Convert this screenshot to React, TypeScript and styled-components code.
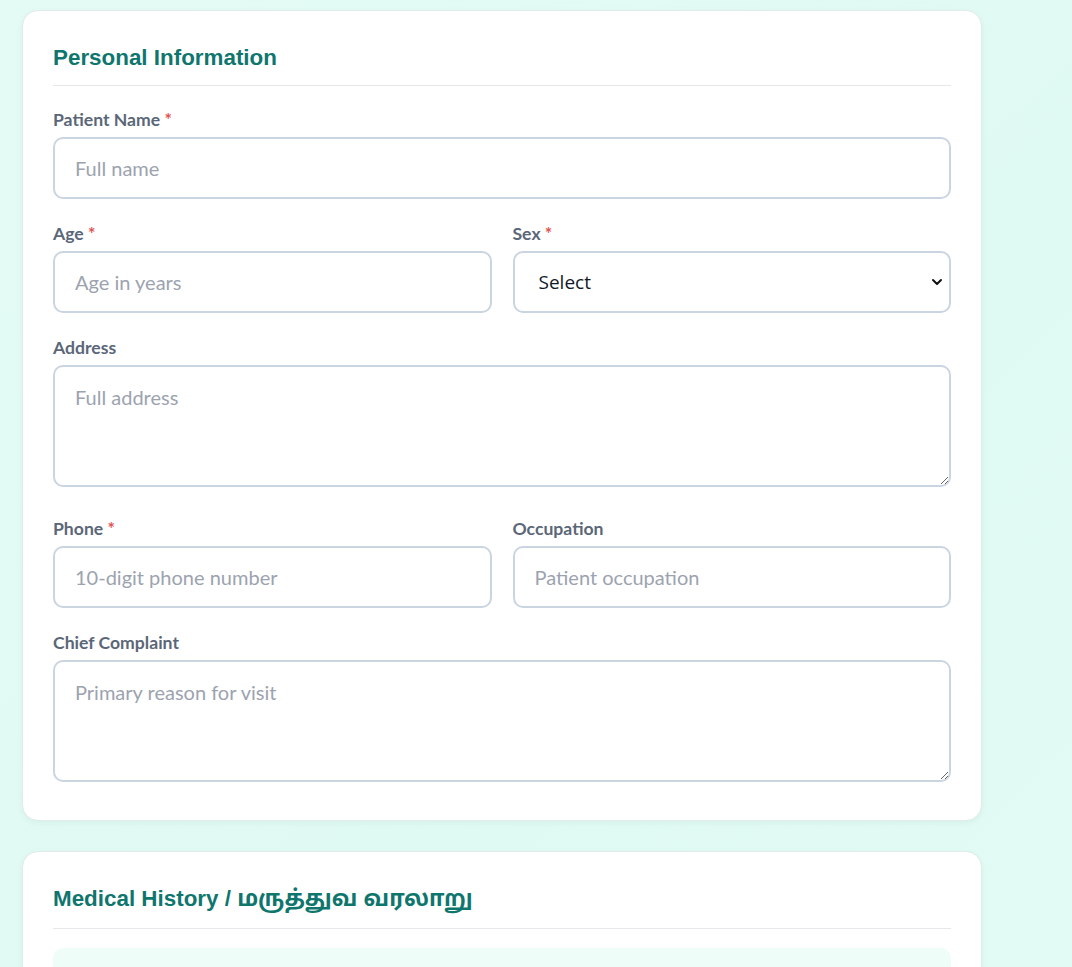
import React from "react";
import styled, {createGlobalStyle} from "styled-components";
import {ChevronDown} from "lucide-react";

const GlobalStyle = createGlobalStyle`
  html, body {
    margin: 0;
    padding: 0;
  }

  body {
    min-height: 100vh;
    background: linear-gradient(135deg, #e4fbf5 0%, #dffaf3 60%, #e2fbf5 100%);
    font-family: Lato, "Noto Sans", "Liberation Sans", sans-serif;
  }
`

export const Page = styled.div`
  padding: 10px 0 0 22px;
`

export const Column = styled.div`
  width: 960px;
  display: flex;
  flex-direction: column;
  gap: 30px;
`

export const Card = styled.section`
  background: #ffffff;
  border: 1px solid #e1ebe8;
  border-radius: 16px;
  padding: 30px;
  box-shadow: 0 2px 6px rgba(15, 60, 50, 0.05);
`

export const CardTitle = styled.h2<{ $gap?: number }>`
  margin: 0 0 ${({$gap}) => ($gap ?? 23)}px;
  padding: 4px 0 14px;
  border-bottom: 1px solid #e5e7eb;
  font-family: "Liberation Sans", Arial, "Noto Sans Tamil", "Noto Sans", sans-serif;
  font-size: 1.4rem;
  font-weight: 700;
  color: #0f766e;
`

export const Row = styled.div`
  display: grid;
  grid-template-columns: 1fr 1fr;
  column-gap: 21px;
`

export const Field = styled.div<{ $gap?: number }>`
  margin-bottom: ${({$gap}) => ($gap ?? 24)}px;
`

export const Label = styled.label`
  display: block;
  margin-bottom: 7px;
  font-size: 17.6px;
  font-weight: 700;
  color: #5b6778;
`

export const Required = styled.span`
  color: #e05252;
`

const controlStyle = `
  display: block;
  width: 100%;
  box-sizing: border-box;
  border: 2px solid #cbd5e1;
  border-radius: 10px;
  background: #ffffff;
  font-family: Lato, "Noto Sans", sans-serif;
  font-size: 20px;
  color: #1f2937;
  outline: none;

  &::placeholder {
    color: #9ca3af;
  }
`

export const Input = styled.input`
  ${controlStyle}
  height: 62px;
  padding: 0 20px;
`

export const TextArea = styled.textarea`
  ${controlStyle}
  height: 122px;
  padding: 18px 20px;
  resize: vertical;
`

export const SelectWrap = styled.div`
  position: relative;
`

export const Select = styled.select`
  ${controlStyle}
  height: 62px;
  padding: 0 24px;
  appearance: none;
  font-family: "Open Sans", "Noto Sans", sans-serif;
  font-size: 19px;
  color: #111827;
`

export const Chevron = styled(ChevronDown)`
  position: absolute;
  right: 6px;
  top: 50%;
  transform: translateY(-50%);
  color: #111;
  pointer-events: none;
`

export const HistoryBox = styled.div`
  height: 80px;
  border-radius: 10px;
  background: #effdf9;
`

const App = () => {
    return (
        <>
            <GlobalStyle/>
            <Page>
                <Column>
                    <Card>
                        <CardTitle>Personal Information</CardTitle>

                        <Field>
                            <Label>Patient Name <Required>*</Required></Label>
                            <Input placeholder="Full name"/>
                        </Field>

                        <Row>
                            <Field>
                                <Label>Age <Required>*</Required></Label>
                                <Input placeholder="Age in years"/>
                            </Field>
                            <Field>
                                <Label>Sex <Required>*</Required></Label>
                                <SelectWrap>
                                    <Select defaultValue="">
                                        <option value="">Select</option>
                                        <option value="male">Male</option>
                                        <option value="female">Female</option>
                                        <option value="other">Other</option>
                                    </Select>
                                    <Chevron size={16} strokeWidth={3}/>
                                </SelectWrap>
                            </Field>
                        </Row>

                        <Field $gap={31}>
                            <Label>Address</Label>
                            <TextArea placeholder="Full address"/>
                        </Field>

                        <Row>
                            <Field>
                                <Label>Phone <Required>*</Required></Label>
                                <Input placeholder="10-digit phone number"/>
                            </Field>
                            <Field>
                                <Label>Occupation</Label>
                                <Input placeholder="Patient occupation"/>
                            </Field>
                        </Row>

                        <Field $gap={8}>
                            <Label>Chief Complaint</Label>
                            <TextArea placeholder="Primary reason for visit"/>
                        </Field>
                    </Card>

                    <Card>
                        <CardTitle $gap={19}>Medical History / மருத்துவ வரலாறு</CardTitle>
                        <HistoryBox/>
                    </Card>
                </Column>
            </Page>
        </>
    );
};

export default App;
